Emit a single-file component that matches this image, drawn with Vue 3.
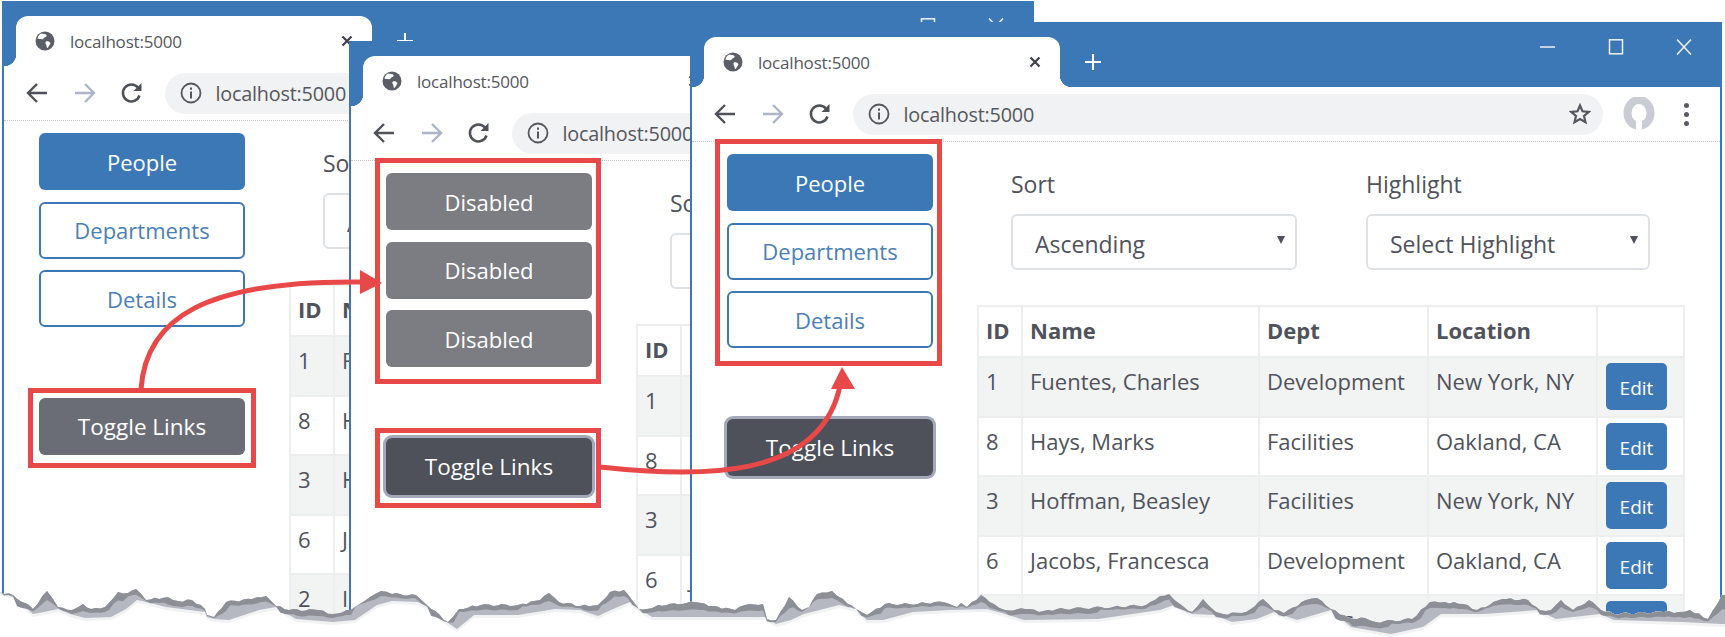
<template>
  <div class="page">
    <section v-for="win in windows" :key="win.id" class="window" :class="win.id">
      <div class="tabstrip">
        <div class="tab">
          <svg class="globe" viewBox="0 0 20 20">
            <circle cx="10" cy="10" r="9.5" fill="#5b5e66" />
            <path d="M6 2.500c2 .6 4.500.2 5.500 1.500.8 1-.8 2-2 2.400-1 .4-.8 1.800-2 1.900C6 8.500 4 7.500 2.500 7.800 2.800 5.500 4 3.500 6 2.500zM11 10.500c1.500-.5 3 .2 4 1 .8.700.2 2-.6 2.700-.8.800-1 2.300-2.200 2.700-.9-.9-.4-2.200-1-3-.7-1-1.300-2.800-.2-3.400z" fill="#fff" />
          </svg>
          <span class="tab-title">localhost:5000</span>
          <span class="tab-close">
            <svg viewBox="0 0 12 12"><path d="M1.500 1.500l9 9M10.500 1.500l-9 9" stroke="#3f4148" stroke-width="2.200" /></svg>
          </span>
        </div>
        <svg class="new-tab" viewBox="0 0 18 18"><path d="M9 1v16M1 9h16" stroke="#fff" stroke-width="2" /></svg>
        <div class="controls">
          <svg viewBox="0 0 16 16"><path d="M0 8h15" stroke="#eef1f6" stroke-width="1.500" /></svg>
          <svg viewBox="0 0 16 16"><rect x="1.500" y="0.800" width="13" height="14" fill="none" stroke="#eef1f6" stroke-width="1.500" /></svg>
          <svg viewBox="0 0 16 16"><path d="M1 0.500l14 15M15 0.500l-14 15" stroke="#eef1f6" stroke-width="1.500" /></svg>
        </div>
      </div>

      <div class="toolbar">
        <svg class="nav" viewBox="0 0 24 24"><path d="M22 12H3M12 3l-9 9 9 9" fill="none" stroke="#4f5158" stroke-width="2.400" /></svg>
        <svg class="nav" viewBox="0 0 24 24"><path d="M2 12h19M12 3l9 9-9 9" fill="none" stroke="#adb5c6" stroke-width="2.400" /></svg>
        <svg class="nav" viewBox="0 0 24 24"><path d="M19.500 14.500A8.500 8.500 0 1 1 18 6.500" fill="none" stroke="#4f5158" stroke-width="2.500" /><path d="M21.500 2v8h-8z" fill="#4f5158" /></svg>
        <div class="address">
          <svg class="info" viewBox="0 0 22 22"><circle cx="11" cy="11" r="9.500" fill="none" stroke="#55575e" stroke-width="1.800" /><path d="M11 9.500v7M11 5.500v2.200" stroke="#55575e" stroke-width="2" /></svg>
          <span class="url">localhost:5000</span>
          <svg class="star" viewBox="0 0 22 22"><path d="M11 2.500l2.500 5.800 6.300.6-4.800 4.100 1.500 6.200L11 16l-5.500 3.200L7 13 2.200 8.900l6.300-.6z" fill="none" stroke="#55575e" stroke-width="2.200" /></svg>
        </div>
        <svg class="avatar" viewBox="0 0 34 34">
          <ellipse cx="17" cy="16" rx="11.500" ry="13" fill="none" stroke="#c9ccd2" stroke-width="8" />
          <path d="M14 33V23h6v10z" fill="#fff" />
        </svg>
        <div class="dots"><i></i><i></i><i></i></div>
      </div>

      <div class="content">
        <aside class="sidebar">
          <div class="links">
            <button v-for="link in win.links" :key="link.key" class="link" :class="link.kind">{{ link.label }}</button>
          </div>
          <button class="toggle" :class="win.toggle">Toggle Links</button>
        </aside>

        <main class="main">
          <div class="filters">
            <div class="filter sort">
              <label>Sort</label>
              <div class="select">Ascending</div>
            </div>
            <div class="filter highlight">
              <label>Highlight</label>
              <div class="select">Select Highlight</div>
            </div>
          </div>

          <table>
            <thead>
              <tr><th class="c-id">ID</th><th class="c-name">Name</th><th class="c-dept">Dept</th><th class="c-loc">Location</th><th class="c-edit"></th></tr>
            </thead>
            <tbody>
              <tr v-for="person in people" :key="person.id">
                <td>{{ person.id }}</td>
                <td>{{ person.name }}</td>
                <td>{{ person.dept }}</td>
                <td>{{ person.location }}</td>
                <td><button class="edit">Edit</button></td>
              </tr>
            </tbody>
          </table>
        </main>
      </div>
    </section>

    <!-- callouts and the torn paper edge lie over the windows -->
    <svg class="overlay" viewBox="0 0 1725 637">
      <g fill="none" stroke="#e84848" stroke-width="5">
        <rect x="30.500" y="390.500" width="223" height="75" />
        <rect x="377.500" y="160.500" width="221" height="221" />
        <rect x="377.500" y="430.500" width="221" height="75" />
        <rect x="717.500" y="141.500" width="222" height="222" />
        <path d="M141 389C146 318 205 280 362 282" />
        <path d="M600 467C700 478 820 480 840 386" />
      </g>
      <path d="M382 283L360 270V294z" fill="#e84848" />
      <path d="M842 367L831 389H855z" fill="#e84848" />
      <path :d="paper" fill="#fff" />
      <path :d="halo" fill="#f1f2f3" />
      <path :d="band" fill="#b6b8c1" />
      <path :d="shade" fill="#8d8f96" />
    </svg>
  </div>
</template>

<script setup>
const links = [
  { key: 1, label: "People", kind: "primary" },
  { key: 2, label: "Departments", kind: "outline" },
  { key: 3, label: "Details", kind: "outline" }
]
const disabled = links.map(l => ({ key: l.key, label: "Disabled", kind: "disabled" }))

const windows = [
  { id: "win-one", links, toggle: "idle" },
  { id: "win-two", links: disabled, toggle: "focus" },
  { id: "win-three", links, toggle: "focus" }
]

const people = [
  { id: 1, name: "Fuentes, Charles", dept: "Development", location: "New York, NY" },
  { id: 8, name: "Hays, Marks", dept: "Facilities", location: "Oakland, CA" },
  { id: 3, name: "Hoffman, Beasley", dept: "Facilities", location: "New York, NY" },
  { id: 6, name: "Jacobs, Francesca", dept: "Development", location: "Oakland, CA" },
  { id: 2, name: "Irwin, Hayes", dept: "Facilities", location: "Oakland, CA" }
]

// torn edge, traced from the picture: upper and lower side of the shadow
const upper = [[0,592],[13,595],[33,609],[47,591],[58,607],[72,610],[83,604],[91,609],[105,607],[118,592],[128,593],[136,589],[146,600],[168,597],[178,601],[192,600],[205,609],[207,615],[214,617],[226,602],[252,599],[266,596],[276,606],[289,610],[318,610],[333,614],[351,610],[370,597],[381,591],[392,594],[416,595],[427,605],[448,622],[459,609],[481,605],[518,605],[540,600],[549,593],[559,602],[580,606],[598,605],[610,592],[624,590],[632,600],[639,609],[647,609],[658,605],[682,604],[695,602],[713,606],[735,610],[745,605],[763,604],[767,619],[776,620],[789,597],[802,610],[809,607],[817,594],[832,591],[843,599],[856,609],[867,615],[885,604],[909,604],[943,602],[957,607],[961,603],[967,607],[981,595],[994,604],[1005,610],[1029,609],[1039,612],[1057,609],[1113,607],[1146,605],[1160,596],[1169,594],[1180,604],[1192,612],[1203,599],[1216,612],[1223,614],[1246,612],[1263,599],[1274,610],[1284,613],[1306,600],[1317,598],[1331,609],[1349,618],[1365,618],[1376,622],[1412,619],[1430,602],[1445,602],[1463,604],[1477,610],[1502,599],[1528,600],[1540,610],[1551,610],[1561,600],[1573,610],[1589,600],[1601,610],[1614,614],[1664,612],[1679,612],[1690,610],[1708,619],[1722,595],[1725,595]]
const lower = [[0,592],[13,597],[33,614],[44,612],[58,609],[70,614],[85,618],[111,617],[126,609],[137,600],[146,602],[166,607],[205,612],[207,617],[214,619],[229,620],[259,610],[276,607],[296,619],[333,622],[355,620],[377,605],[392,601],[418,602],[427,607],[448,623],[457,629],[474,615],[518,615],[555,609],[580,610],[598,616],[613,609],[630,602],[639,609],[652,617],[765,617],[776,624],[791,620],[804,614],[839,605],[856,609],[867,620],[883,620],[913,612],[950,610],[987,609],[1005,614],[1024,620],[1098,619],[1146,612],[1160,610],[1174,605],[1192,614],[1214,615],[1232,622],[1257,619],[1274,612],[1297,620],[1331,610],[1351,627],[1391,634],[1423,627],[1441,614],[1484,614],[1538,610],[1556,619],[1600,614],[1614,620],[1682,622],[1722,624],[1725,624]]

// break the straight parts up a little so the edge looks torn
const rough = pts => {
  const out = []
  pts.forEach((p, i) => {
    const next = pts[i + 1]
    out.push(p)
    if (!next) return
    const steps = Math.floor((next[0] - p[0]) / 4)
    for (let s = 1; s < steps; s++) {
      const t = s / steps
      const x = p[0] + (next[0] - p[0]) * t
      out.push([x, p[1] + (next[1] - p[1]) * t + Math.sin(x * 1.9) * 1.1])
    }
  })
  return out
}
const line = pts => pts.map(p => p[0].toFixed(1) + " " + p[1].toFixed(1)).join("L")
const top = rough(upper)
const offset = (pts, dy) => pts.map(p => [p[0], p[1] + dy])

const paper = "M" + line(top) + "L1725 637L0 637z"
const halo = "M" + line(top) + "L" + line(offset(lower, 3).reverse()) + "z"
const band = "M" + line(top) + "L" + line([...lower].reverse()) + "z"
const middle = top.map(p => {
  const next = lower.find(q => q[0] >= p[0]) || lower[lower.length - 1]
  return [p[0], p[1] + Math.max(0, next[1] - p[1]) * 0.5]
})
const shade = "M" + line(top) + "L" + line(middle.reverse()) + "z"
</script>

<style>
html, body {
  overflow: hidden;
  background: #fff;
}
</style>

<style scoped>
.page {
  position: relative;
  width: 1725px;
  height: 637px;
  overflow: hidden;
  background: #fff;
  font-family: "Open Sans", "Noto Sans", sans-serif;
  color: #50525c;
}

.window {
  position: absolute;
  width: 1032px;
  height: 660px;
  padding: 15px 2px 0;
  box-sizing: border-box;
  background: #3d78b6;
  display: flex;
  flex-direction: column;
}
.win-one { left: 2px; top: 1px; }
.win-two { left: 349px; top: 41px; }
.win-three { left: 690px; top: 22px; }

.tabstrip {
  height: 50px;
  display: flex;
  flex: none;
}
.tab {
  position: relative;
  width: 356px;
  margin-left: 12px;
  background: #fff;
  border-radius: 12px 12px 0 0;
  display: flex;
  align-items: center;
  padding: 0 19px 0 19px;
  box-sizing: border-box;
}
.tab::after {
  content: "";
  position: absolute;
  right: -12px;
  bottom: 0;
  width: 12px;
  height: 12px;
  background: radial-gradient(circle at 100% 0, transparent 12px, #fff 12.500px);
}
.tab::before {
  content: "";
  position: absolute;
  left: -12px;
  bottom: 0;
  width: 12px;
  height: 12px;
  background: radial-gradient(circle at 0 0, transparent 12px, #fff 12.500px);
}
.globe {
  width: 20px;
  height: 20px;
  margin-right: 15px;
}
.tab-title {
  font-size: 17px;
  letter-spacing: -0.2px;
  color: #55575e;
}
.tab-close {
  margin-left: auto;
  width: 12px;
  height: 12px;
  display: flex;
}
.new-tab {
  width: 18px;
  height: 18px;
  margin: 16px 0 0 24px;
}
.controls {
  margin-left: auto;
  display: flex;
  gap: 52px;
  padding: 2px 28px 0 0;
}
.controls svg {
  width: 16px;
  height: 16px;
}

.toolbar {
  height: 55px;
  flex: none;
  box-sizing: border-box;
  background: #fff;
  border-bottom: 1px dotted #c2c6cc;
  display: flex;
  align-items: center;
  padding-left: 21px;
}
.nav {
  width: 24px;
  height: 24px;
  margin-right: 23.500px;
}
.address {
  width: 750px;
  height: 41px;
  margin-left: -3px;
  background: #f1f2f3;
  border-radius: 21px;
  display: flex;
  align-items: center;
  padding: 0 12px 0 15px;
  box-sizing: border-box;
}
.info {
  width: 22px;
  height: 22px;
  margin-right: 14px;
}
.url {
  font-size: 19.800px;
  letter-spacing: -0.2px;
  color: #55575e;
}
.star {
  width: 22px;
  height: 22px;
  margin-left: auto;
}
.avatar {
  width: 34px;
  height: 34px;
  margin-left: 19px;
}
.dots {
  margin-left: 28px;
  display: flex;
  flex-direction: column;
  gap: 4px;
}
.dots i {
  width: 5px;
  height: 5px;
  border-radius: 50%;
  background: #5a5c63;
}

.content {
  flex: 1;
  background: #fff;
  display: flex;
}
.sidebar {
  width: 206px;
  margin-left: 35px;
  padding-top: 12px;
  flex: none;
}
.links {
  display: flex;
  flex-direction: column;
  gap: 11.500px;
}
button {
  font-family: inherit;
  cursor: pointer;
}
.link, .toggle {
  display: block;
  width: 206px;
  height: 57px;
  border-radius: 6px;
  font-size: 22px;
  border: 2px solid transparent;
}
.primary {
  background: #3d78b6;
  color: #fff;
}
.outline {
  background: #fff;
  color: #4a7fb8;
  border-color: #3d78b6;
}
.disabled {
  background: #7c7d83;
  color: #fff;
}
.toggle {
  margin-top: 71px;
  color: #fff;
  font-size: 22.500px;
}
.idle {
  background: #6b6d76;
}
.focus {
  background: #4e505a;
  box-shadow: 0 0 0 3px #a3a9b8;
}

.main {
  margin-left: 44px;
  width: 706px;
  flex: none;
}
.filters {
  display: flex;
  padding: 22px 0 0 34px;
  gap: 69px;
}
.filter label {
  display: block;
  height: 50px;
  font-size: 23px;
  line-height: 41px;
}
.sort { width: 286px; }
.highlight { width: 284px; }
.select {
  position: relative;
  height: 56px;
  box-sizing: border-box;
  border: 2px solid #dfe2e5;
  border-radius: 6px;
  padding-left: 22px;
  font-size: 23px;
  line-height: 56px;
}
.select::after {
  content: "";
  position: absolute;
  right: 10px;
  top: 20px;
  border-left: 4.500px solid transparent;
  border-right: 4.500px solid transparent;
  border-top: 8px solid #50525c;
}

table {
  margin-top: 35px;
  width: 706px;
  border-collapse: collapse;
  table-layout: fixed;
  font-size: 22px;
}
th, td {
  border: 2px solid #eceeef;
  padding: 8px 6px 0 7px;
  box-sizing: border-box;
  text-align: left;
  vertical-align: top;
  height: 59.500px;
}
th {
  height: 51px;
  font-weight: 700;
  color: #50525c;
}
td:last-child {
  padding-top: 5px;
}
tbody tr:nth-child(odd) td {
  background: #f2f3f3;
}
.c-id { width: 44px; }
.c-name { width: 237px; }
.c-dept { width: 169px; }
.c-loc { width: 169px; }
.c-edit { width: 87px; }
.edit {
  width: 61px;
  height: 47px;
  margin-left: 1px;
  background: #3d78b6;
  color: #fff;
  border: none;
  border-radius: 5px;
  font-size: 19px;
  padding: 3px 0 0;
}

.overlay {
  position: absolute;
  left: 0;
  top: 0;
  width: 1725px;
  height: 637px;
}
</style>
